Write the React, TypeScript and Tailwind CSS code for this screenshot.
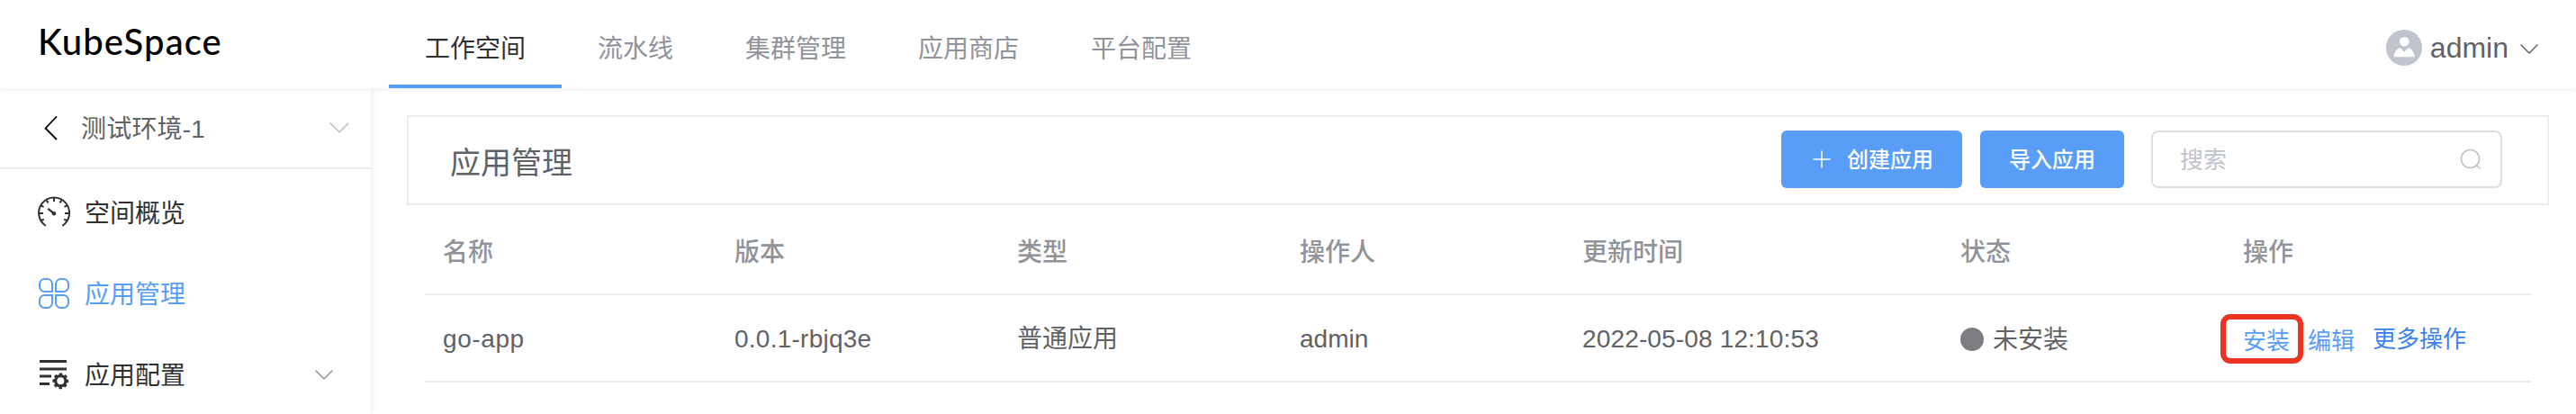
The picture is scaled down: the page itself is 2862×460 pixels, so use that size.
import type { ReactNode } from 'react';

const tabs = ['工作空间', '流水线', '集群管理', '应用商店', '平台配置'];

function Chevron({ className }: { className: string }) {
  return (
    <svg viewBox="0 0 20 11" fill="none" stroke="currentColor" strokeLinecap="round" strokeLinejoin="round" className={className}>
      <path d="M1 1l9 9 9-9" strokeWidth="1.5" />
    </svg>
  );
}

function GaugeIcon() {
  return (
    <svg viewBox="0 0 36 36" width="36" height="36" fill="none" stroke="currentColor" strokeWidth="2">
      <path d="M8.800 32.800A17 17 0 1 1 27.400 32.800" />
      <path d="M18 2v4M9.800 4.600l1.600 2.900M26.200 4.600l-1.600 2.900M3.700 10.300l2.800 1.700M32.300 10.300l-2.800 1.700M2 19h4M34 19h-4M4 27l2.800-1.400M32 27l-2.800-1.400" />
      <path d="M11.300 13.800l6 4.800" strokeWidth="2.200" />
      <circle cx="18" cy="19.200" r="2.200" fill="currentColor" stroke="none" />
    </svg>
  );
}

function AppsIcon() {
  return (
    <svg viewBox="0 0 36 36" width="36" height="36" fill="none" stroke="currentColor" strokeWidth="2">
      <path d="M7.500 2h3A5.500 5.500 0 0 1 16 7.500V16H7.500A5.500 5.500 0 0 1 2 10.500v-3A5.500 5.500 0 0 1 7.500 2z" />
      <path d="M28.500 2h-3A5.500 5.500 0 0 0 20 7.500V16h8.500a5.500 5.500 0 0 0 5.500-5.500v-3A5.500 5.500 0 0 0 28.500 2z" />
      <path d="M7.500 34h3a5.500 5.500 0 0 0 5.500-5.500V20H7.500A5.500 5.500 0 0 0 2 25.500v3A5.500 5.500 0 0 0 7.500 34z" />
      <path d="M28.500 34h-3a5.500 5.500 0 0 1-5.500-5.500V20h8.500a5.500 5.500 0 0 1 5.500 5.500v3a5.500 5.500 0 0 1-5.500 5.500z" />
    </svg>
  );
}

function ConfigIcon() {
  return (
    <svg viewBox="0 0 36 36" width="36" height="36" fill="none" stroke="currentColor">
      <path d="M2 3.500h30M2 11.900h30M2 20h13M2 28.400h11" strokeWidth="3" />
      <circle cx="25.300" cy="25.300" r="5.600" strokeWidth="3.200" />
      <circle cx="25.300" cy="25.300" r="7.600" strokeWidth="2.600" strokeDasharray="3.400 2.570" strokeDashoffset="1.700" />
    </svg>
  );
}

function AvatarIcon() {
  return (
    <svg viewBox="0 0 40 40" width="40" height="40">
      <circle cx="20" cy="20" r="20" fill="#c0c4cc" />
      <circle cx="20.300" cy="13.200" r="5.300" fill="#fff" />
      <path d="M8.700 30.300c0-4 2.300-8 5.800-9.800h1.800l4 4.300 4-4.300h1.800c3.400 1.800 5.300 5.800 5.300 9.800z" fill="#fff" />
    </svg>
  );
}

function MenuRow({ icon, label, tone, arrow }: { icon: ReactNode; label: string; tone: string; arrow?: boolean }) {
  return (
    <div className={`flex h-[90px] items-center pr-[42px] pl-[42px] ${tone}`}>
      <span className="w-[52px] shrink-0">{icon}</span>
      <span className="flex-1 pt-[3px] leading-[40px]">{label}</span>
      {arrow && <Chevron className="h-[11px] w-[20px] text-[#909399]" />}
    </div>
  );
}

const columns = 'grid grid-cols-[324px_314px_314px_314px_420px_314px_340px] items-center';

export default function App() {
  return (
    <div className="flex h-[460px] w-[2862px] flex-col overflow-hidden bg-white text-[28px] text-[#606266] [font-family:'Liberation_Sans','Noto_Sans_CJK_SC',sans-serif]">
      <header className="relative z-10 flex h-[98px] shrink-0 bg-white shadow-[0_1px_8px_rgba(0,21,41,0.08)]">
        <div className="w-[432px] pl-[42px] text-[40px] leading-[93px] font-medium tracking-[1.1px] text-black [font-family:Lato,sans-serif]">KubeSpace</div>
        <nav className="flex">
          {tabs.map((tab, i) => (
            <div
              key={tab}
              className={
                i === 0
                  ? 'h-[98px] border-b-4 border-[#589df8] px-10 leading-[109px] text-[#303133]'
                  : 'h-[98px] px-10 leading-[109px] text-[#909399]'
              }
            >
              {tab}
            </div>
          ))}
        </nav>
        <div className="ml-auto flex items-center pt-[8px] pr-[42px]">
          <AvatarIcon />
          <span className="ml-[9px] text-[32px] leading-[40px]">admin</span>
          <Chevron className="mt-[2px] ml-[13px] h-[11px] w-[20px]" />
        </div>
      </header>

      <div className="flex flex-1">
        <aside className="w-[412px] shrink-0 shadow-[2px_0_6px_rgba(0,21,41,0.06)]">
          <div className="flex h-[90px] items-center border-b-2 border-[#ebebf2] pr-[24px] pl-[49px]">
            <svg viewBox="0 0 15 28" width="15" height="28" fill="none" stroke="#000" strokeWidth="1.8" strokeLinecap="round" strokeLinejoin="round">
              <path d="M13.500 2L1.500 14.500l12 12" />
            </svg>
            <span className="ml-[26px] flex-1 pt-[3px] leading-[40px] tracking-[0.2px]">测试环境-1</span>
            <Chevron className="h-[12px] w-[22px] text-[#c0c4cc]" />
          </div>
          <div className="pt-[3px]">
            <MenuRow icon={<GaugeIcon />} label="空间概览" tone="text-[#303133]" />
            <MenuRow icon={<AppsIcon />} label="应用管理" tone="text-[#589df8]" />
            <MenuRow icon={<ConfigIcon />} label="应用配置" tone="text-[#303133]" arrow />
          </div>
        </aside>

        <main className="flex-1 pt-[30px] pr-[30px] pl-[40px]">
          <div className="flex h-[100px] items-center border-2 border-[#ebebf2] pr-[50px] pl-[46px]">
            <h1 className="flex-1 pt-[6px] text-[34px] leading-[48px]">应用管理</h1>
            <button className="mb-[2px] flex h-[64px] w-[201px] items-center rounded-[6px] bg-[#589df8] pl-[34px] text-[24px] font-medium text-white">
              <svg viewBox="0 0 22 22" width="22" height="22" stroke="currentColor" strokeWidth="1.5">
                <path d="M11 1.500v19M1.500 11h19" />
              </svg>
              <span className="ml-[17px] pt-px">创建应用</span>
            </button>
            <button className="mb-[2px] ml-5 h-[64px] w-[160px] rounded-[6px] bg-[#589df8] pt-px text-[24px] font-medium text-white">导入应用</button>
            <div className="mb-[2px] ml-[30px] flex h-[64px] w-[390px] items-center justify-between rounded-[8px] border-2 border-[#dcdfe6] pr-[21px] pl-[30px] text-[26px] text-[#c0c4cc]">
              <span className="pt-[2px]">搜索</span>
              <svg viewBox="0 0 24 24" width="24" height="24" fill="none" stroke="currentColor" strokeWidth="1.6" strokeLinecap="round">
                <circle cx="11.500" cy="11.500" r="10" />
                <path d="M18.600 18.600l3.600 3.600" />
              </svg>
            </div>
          </div>

          <div className="mx-[20px]">
            <div className={`${columns} h-[100px] border-b-2 border-[#ebebf2] pt-[7px] font-medium text-[#909399]`}>
              {['名称', '版本', '类型', '操作人', '更新时间', '状态', '操作'].map((name) => (
                <div key={name} className="pl-5 leading-[40px]">{name}</div>
              ))}
            </div>
            <div className={`${columns} h-[97px] border-b-2 border-[#ebebf2] pt-[2px] leading-[40px]`}>
              <div className="pl-5 tracking-[0.6px]">go-app</div>
              <div className="pl-5 tracking-[0.25px]">0.0.1-rbjq3e</div>
              <div className="pt-px pl-5">普通应用</div>
              <div className="pl-5">admin</div>
              <div className="pl-5 tracking-[0.15px]">2022-05-08 12:10:53</div>
              <div className="flex items-center pl-5">
                <span className="mr-[10px] size-[26px] rounded-full bg-[#7c7d82]" />
                <span className="pt-[2px]">未安装</span>
              </div>
              <div className="flex items-center pl-5 text-[26px] leading-[40px] text-[#589df8]">
                <span className="relative mt-[4px]">
                  安装
                  <span className="absolute top-[-10px] left-[-25px] h-[55px] w-[92px] rounded-[11px] border-[6px] border-[#ec3423]" />
                </span>
                <span className="mt-[4px] ml-5">编辑</span>
                <span className="ml-5 text-[#3a82ee]">更多操作</span>
              </div>
            </div>
          </div>
        </main>
      </div>
    </div>
  );
}
